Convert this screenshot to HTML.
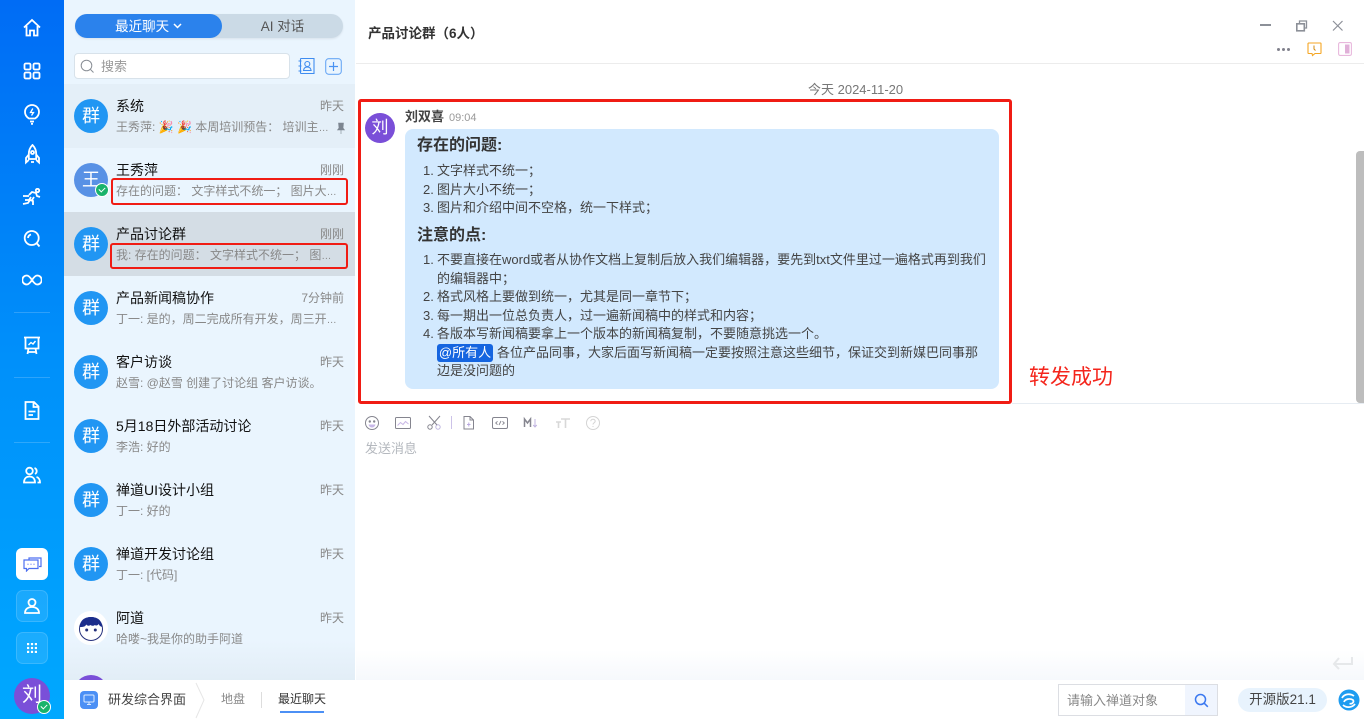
<!DOCTYPE html>
<html><head><meta charset="utf-8">
<style>
*{box-sizing:border-box;margin:0;padding:0}
html,body{width:1364px;height:719px;overflow:hidden;background:#fff;font-family:"Liberation Sans","Noto Sans CJK SC",sans-serif;font-size:13px;color:#333}
.a{position:absolute;white-space:nowrap}
#side{position:absolute;left:0;top:0;width:64px;height:719px;background:linear-gradient(180deg,#006cf5 0%,#0090fa 50%,#00a8ff 100%)}
#side svg{position:absolute;fill:none;stroke:#fff;stroke-width:1.8}
.sep{position:absolute;left:14px;width:36px;height:1px;background:rgba(255,255,255,.18)}
#list{position:absolute;left:64px;top:0;width:291px;height:680px;background:#eaf5fe;overflow:hidden}
.row{position:absolute;left:0;width:291px;height:64px}
.av{position:absolute;left:10px;top:15px;width:34px;height:34px;border-radius:50%;background:#2196f3;color:#fff;font-size:18px;line-height:34px;text-align:center}
.nm{position:absolute;left:52px;top:12px;font-size:14px;line-height:20px;color:#111;white-space:nowrap}
.tm{position:absolute;right:11px;top:12px;font-size:12px;line-height:20px;color:#888;white-space:nowrap}
.ms{position:absolute;left:52px;top:33px;font-size:12px;line-height:20px;color:#888;white-space:nowrap}
.e{font-size:10px}
.redb{position:absolute;border:2px solid #f01c14;border-radius:3px}
.li{position:absolute;left:437px;font-size:13px;line-height:18px;color:#444;white-space:nowrap}
.n{position:absolute;left:423px;font-size:13px;line-height:18px;color:#444}
.h{position:absolute;left:417px;font-size:16px;line-height:22px;font-weight:700;color:#333;white-space:nowrap}
.chk{position:absolute;border-radius:50%;background:#19b36b;border:1.5px solid #fff}
.chk:after{content:"";position:absolute;left:3px;top:2.5px;width:5px;height:3px;border-left:1.2px solid #fff;border-bottom:1.2px solid #fff;transform:rotate(-45deg)}
</style></head><body>

<div id="side">
<svg style="left:22px;top:18px" width="20" height="20" viewBox="0 0 20 20"><path d="M2 9.5 10 2l8 7.5M4.500 8v9.500h3.500v-5h4v5h3.500V8"/></svg>
<svg style="left:23px;top:62px" width="18" height="18" viewBox="0 0 18 18"><rect x="1.500" y="1.500" width="6" height="6" rx="1.300"/><rect x="10.500" y="1.500" width="6" height="6" rx="1.300"/><rect x="1.500" y="10.500" width="6" height="6" rx="1.300"/><rect x="10.500" y="10.500" width="6" height="6" rx="1.300"/></svg>
<svg style="left:23px;top:103px" width="18" height="22" viewBox="0 0 18 22"><path d="M6 15.500C3.500 14 2 12 2 9a7 7 0 0 1 14 0c0 3-1.500 5-4 6.500ZM7 18.500h4M8 20.800h2"/><path d="M9.800 5.500 7.500 9.500h3L8.500 12.500" stroke-width="1.300"/></svg>
<svg style="left:24px;top:144px" width="17" height="21" viewBox="0 0 17 21"><path d="M8.500 1C5.500 4 4.800 7 4.800 10v5h7.400v-5c0-3-.7-6-3.700-9ZM4.800 10.500 2 14v4.500l2.800-2.500M12.200 10.500 15 14v4.500L12.200 16M7 18h3"/><circle cx="8.500" cy="8.500" r="1.500"/></svg>
<svg style="left:22px;top:188px" width="20" height="18" viewBox="0 0 20 18"><path d="M1 8h6M3 12h4l2-3M1 16l5-1 2-3 3 1v4M7 7l3-3 4 1 1 3 3 1M12 9l-2 3"/><circle cx="15.500" cy="2.500" r="1.700"/></svg>
<svg style="left:23px;top:229px" width="18" height="19" viewBox="0 0 18 19"><circle cx="8.700" cy="9" r="7"/><path d="m13.500 14 3 3.500M5 9a4 4 0 0 1 3-3.500"/></svg>
<svg style="left:22px;top:273px" width="20" height="14" viewBox="0 0 20 14"><path d="M10 7C8 4 6.500 2.500 4.800 2.500a4.500 4.500 0 0 0 0 9C6.500 11.500 8 10 10 7c2-3 3.500-4.500 5.200-4.500a4.500 4.500 0 0 1 0 9C13.500 11.500 12 10 10 7Z"/></svg>
<div class="sep" style="top:312px"></div>
<svg style="left:23px;top:336px" width="18" height="19" viewBox="0 0 18 19"><path d="M1 1.500h16M2.500 1.500v11h13v-11M4.500 18l1-5.500M13.500 18l-1-5.500M5 16h8"/><path d="m5.500 9 2.500-2.500 2 1.500 2.500-3" stroke-width="1.400"/></svg>
<div class="sep" style="top:377px"></div>
<svg style="left:24px;top:401px" width="16" height="19" viewBox="0 0 16 19"><path d="M1.500 1h8.500L14.500 5.500V18h-13ZM9.500 1v5h5M4.500 10.500h7M4.500 14h4.500"/></svg>
<div class="sep" style="top:442px"></div>
<svg style="left:23px;top:466px" width="18" height="18" viewBox="0 0 18 18"><circle cx="6.500" cy="5" r="3.300"/><path d="M1 16.500c0-3.500 2-6 5.500-6s5.500 2.500 5.500 6ZM11.500 2a3.300 3.300 0 0 1 .5 6M13.500 11c2 .5 3.500 2.500 3.500 5.500h-2.500"/></svg>

<div class="a" style="left:16px;top:548px;width:32px;height:32px;border-radius:6px;background:#fff"></div>
<svg style="left:23px;top:557px;stroke:#4d6ff0;stroke-width:1.200" width="19" height="15" viewBox="0 0 19 15"><path d="M6 2.500V1h12v8.500h-2M1 3h14v8.500H6l-2.500 2.500v-2.500H1Z"/><path d="M4.500 7.300h1M7.500 7.300h1M10.500 7.300h1" stroke="#7d8cf5" stroke-width="1.400"/></svg>
<div class="a" style="left:16px;top:590px;width:32px;height:32px;border-radius:7px;background:rgba(255,255,255,.1);border:1px solid rgba(255,255,255,.14)"></div>
<svg style="left:24px;top:598px" width="16" height="16" viewBox="0 0 16 16"><circle cx="8" cy="4.500" r="3.500"/><path d="M1 15c0-3.500 2.500-6 7-6s7 2.500 7 6Z"/></svg>
<div class="a" style="left:16px;top:632px;width:32px;height:32px;border-radius:7px;background:rgba(255,255,255,.1);border:1px solid rgba(255,255,255,.14)"></div>
<svg style="left:27px;top:643px;stroke:none;fill:#fff" width="10" height="10" viewBox="0 0 10 10"><rect width="2.200" height="2.200"/><rect x="3.900" width="2.200" height="2.200"/><rect x="7.800" width="2.200" height="2.200"/><rect y="3.900" width="2.200" height="2.200"/><rect x="3.900" y="3.900" width="2.200" height="2.200"/><rect x="7.800" y="3.900" width="2.200" height="2.200"/><rect y="7.800" width="2.200" height="2.200"/><rect x="3.900" y="7.800" width="2.200" height="2.200"/><rect x="7.800" y="7.800" width="2.200" height="2.200"/></svg>
<div class="a" style="left:14px;top:678px;width:36px;height:36px;border-radius:50%;background:#7a4fd8;color:#fff;font-size:20px;line-height:35px;text-align:center">刘</div>
<div class="chk" style="left:37px;top:700px;width:14px;height:14px"></div>
</div>

<div id="list">
<div class="a" style="left:11px;top:14px;width:268px;height:24px;border-radius:12px;background:#cbdae6;box-shadow:0 1px 2px rgba(0,0,0,.08)"></div>
<div class="a" style="left:11px;top:14px;width:147px;height:24px;border-radius:12px;background:#2b82ec;color:#fff;text-align:center;line-height:25px;font-size:13.5px">最近聊天 <svg width="9" height="6" viewBox="0 0 9 6" style="vertical-align:2px"><path d="M1 1l3.500 3.500L8 1" fill="none" stroke="#fff" stroke-width="1.500"/></svg></div>
<div class="a" style="left:158px;top:14px;width:121px;height:24px;color:#555;text-align:center;line-height:25px;font-size:13.5px">AI 对话</div>
<div class="a" style="left:10px;top:53px;width:216px;height:26px;border-radius:4px;background:#fff;border:1px solid #d8e2ea"></div>
<svg class="a" style="left:16px;top:59px" width="15" height="15" viewBox="0 0 15 15"><circle cx="6.500" cy="6.500" r="5.300" fill="none" stroke="#8a8f96" stroke-width="1"/><path d="m10.500 10.500 3 3" stroke="#8a8f96"/></svg>
<div class="a" style="left:37px;top:57px;font-size:13px;line-height:20px;color:#999">搜索</div>
<svg class="a" style="left:234px;top:57px" width="18" height="18" viewBox="0 0 18 18"><path d="M2.500 1.500h13.500v15H2.500M.5 4h3M.5 9h3M.5 14h3" fill="none" stroke="#3f8cf0" stroke-width="1.100"/><path d="M2.500 1.500v15" stroke="#3f8cf0" stroke-width="1.100"/><circle cx="9.300" cy="7" r="2.500" fill="none" stroke="#3f8cf0" stroke-width="1.100"/><path d="M5.500 13.500c.3-2.500 2-3.500 3.800-3.500s3.500 1 3.800 3.500Z" fill="none" stroke="#3f8cf0" stroke-width="1.100"/></svg>
<svg class="a" style="left:261px;top:58px" width="17" height="17" viewBox="0 0 17 17"><rect x=".7" y=".7" width="15.600" height="15.600" rx="3" fill="none" stroke="#6aa8f5" stroke-width="1.100"/><path d="M8.500 4v9M4 8.500h9" stroke="#4a93f2" stroke-width="1.200"/></svg>

<div class="row" style="top:84px;background:#e4eff8"><div class="av">群</div><div class="nm">系统</div><div class="tm">昨天</div><div class="ms">王秀萍: 🎉 🎉 本周培训预告： 培训主<span class="e">…</span></div>
<svg class="a" style="left:272px;top:38px" width="10" height="12" viewBox="0 0 10 12"><path d="M2.500 1h5L7 6l1.500 2h-7L3 6ZM5 8v4" fill="#7c8590" stroke="#7c8590" stroke-width=".6"/></svg></div>
<div class="row" style="top:148px"><div class="av" style="background:#5891e5">王</div>
<div class="chk" style="left:31px;top:35px;width:14px;height:14px"></div>
<div class="nm">王秀萍</div><div class="tm">刚刚</div><div class="ms">存在的问题： 文字样式不统一； 图片大<span class="e">…</span></div></div>
<div class="row" style="top:212px;background:#d4dde5"><div class="av">群</div><div class="nm">产品讨论群</div><div class="tm">刚刚</div><div class="ms">我: 存在的问题： 文字样式不统一； 图<span class="e">…</span></div></div>
<div class="row" style="top:276px"><div class="av">群</div><div class="nm">产品新闻稿协作</div><div class="tm">7分钟前</div><div class="ms">丁一: 是的，周二完成所有开发，周三开<span class="e">…</span></div></div>
<div class="row" style="top:340px"><div class="av">群</div><div class="nm">客户访谈</div><div class="tm">昨天</div><div class="ms">赵雪: @赵雪 创建了讨论组 客户访谈。</div></div>
<div class="row" style="top:404px"><div class="av">群</div><div class="nm">5月18日外部活动讨论</div><div class="tm">昨天</div><div class="ms">李浩: 好的</div></div>
<div class="row" style="top:468px"><div class="av">群</div><div class="nm">禅道UI设计小组</div><div class="tm">昨天</div><div class="ms">丁一: 好的</div></div>
<div class="row" style="top:532px"><div class="av">群</div><div class="nm">禅道开发讨论组</div><div class="tm">昨天</div><div class="ms">丁一: [代码]</div></div>
<div class="row" style="top:596px"><div class="av" style="background:#fff"></div>
<svg class="a" style="left:10px;top:15px" width="34" height="34" viewBox="0 0 34 34"><circle cx="17" cy="18" r="11.500" fill="#fff" stroke="#25307c" stroke-width="1"/><path d="M5.800 16C6 9 11 6 17 6s11 3 11.200 10c-2-.5-3-1.500-3.500-3-1 1.500-2.500 2-4 1-1 1-3 1-4 0-1.500 1-3.500 1-4.500-.5-.7 1.500-1.500 2.500-6.400 2.500Z" fill="#1c2e8c"/><circle cx="12.700" cy="19" r="1.500" fill="#25307c"/><circle cx="21.300" cy="19" r="1.500" fill="#25307c"/></svg>
<div class="nm">阿道</div><div class="tm">昨天</div><div class="ms">哈喽~我是你的助手阿道</div></div>
<div class="a" style="left:0;top:640px;width:291px;height:40px;background:linear-gradient(180deg,rgba(225,236,245,0),rgba(225,236,245,.85))"></div>
<div class="a" style="left:10px;top:675px;width:34px;height:34px;border-radius:50%;background:#7a4fd8"></div>
</div>

<div class="redb" style="left:111px;top:178px;width:237px;height:27px"></div>
<div class="redb" style="left:110px;top:243px;width:238px;height:26px"></div>

<div class="a" style="left:368px;top:24px;font-size:13.5px;line-height:20px;font-weight:700;color:#333">产品讨论群（6人）</div>
<div class="a" style="left:356px;top:63px;width:1008px;height:1px;background:#ececec"></div>
<svg class="a" style="left:1259px;top:20px" width="90" height="12" viewBox="0 0 90 12" fill="none" stroke="#8c9098"><path d="M1 5h11" stroke-width="2"/><rect x="37.800" y="3.800" width="7.500" height="7" stroke-width="1.600"/><path d="M40.500 3V1h7v7h-2" stroke-width="1.300"/><path d="m74 1 9.500 9.500M83.500 1 74 10.500" stroke-width="1.200"/></svg>
<svg class="a" style="left:1276px;top:47px" width="16" height="5"><circle cx="2.500" cy="2.500" r="1.500" fill="#80808c"/><circle cx="7.500" cy="2.500" r="1.500" fill="#80808c"/><circle cx="12.500" cy="2.500" r="1.500" fill="#80808c"/></svg>
<svg class="a" style="left:1307px;top:42px" width="15" height="15" viewBox="0 0 15 15"><path d="M1.500 1h12a.6.6 0 0 1 .5.500V11a.6.6 0 0 1-.5.500H8L5.500 13.500 5 11.500H1.500A.6.600 0 0 1 1 11V1.500Z" fill="none" stroke="#f5a623" stroke-width="1.100"/><path d="M7 3.500V7l1.500 1.500" stroke="#d08a10" fill="none"/></svg>
<svg class="a" style="left:1338px;top:42px" width="14" height="14"><rect x=".6" y=".6" width="12.800" height="12.800" rx="1.500" fill="none" stroke="#e8b8dc" stroke-width="1.100"/><rect x="7" y="2.500" width="4.500" height="9" fill="#e0b0d8"/></svg>

<div class="a" style="left:808px;top:80px;font-size:13px;line-height:20px;color:#777">今天 2024-11-20</div>

<div class="a" style="left:365px;top:113px;width:30px;height:30px;border-radius:50%;background:#7a4fd8;color:#fff;font-size:17px;line-height:29px;text-align:center">刘</div>
<div class="a" style="left:405px;top:107px;font-size:13px;line-height:20px;font-weight:700;color:#444">刘双喜</div>
<div class="a" style="left:449px;top:108px;font-size:11px;line-height:20px;color:#999">09:04</div>
<div class="a" style="left:405px;top:129px;width:594px;height:260px;background:#d2e9fe;border-radius:8px"></div>

<div class="h" style="top:135px">存在的问题:</div>
<div class="n" style="top:162px">1.</div><div class="li" style="top:162px">文字样式不统一；</div>
<div class="n" style="top:181px">2.</div><div class="li" style="top:181px">图片大小不统一；</div>
<div class="n" style="top:199px">3.</div><div class="li" style="top:199px">图片和介绍中间不空格，统一下样式；</div>
<div class="h" style="top:225px">注意的点:</div>
<div class="n" style="top:251px">1.</div><div class="li" style="top:251px">不要直接在word或者从协作文档上复制后放入我们编辑器，要先到txt文件里过一遍格式再到我们</div>
<div class="li" style="top:270px">的编辑器中；</div>
<div class="n" style="top:288px">2.</div><div class="li" style="top:288px">格式风格上要做到统一，尤其是同一章节下；</div>
<div class="n" style="top:307px">3.</div><div class="li" style="top:307px">每一期出一位总负责人，过一遍新闻稿中的样式和内容；</div>
<div class="n" style="top:325px">4.</div><div class="li" style="top:325px">各版本写新闻稿要拿上一个版本的新闻稿复制，不要随意挑选一个。</div>
<div class="a" style="left:437px;top:344px;width:56px;height:18px;border-radius:3px;background:#1565e0;color:#fff;font-size:13px;line-height:17px;text-align:center">@所有人</div>
<div class="li" style="top:344px;left:497px">各位产品同事，大家后面写新闻稿一定要按照注意这些细节，保证交到新媒巴同事那</div>
<div class="li" style="top:362px">边是没问题的</div>

<div class="redb" style="left:358px;top:99px;width:654px;height:305px;border-width:3px;border-color:#f01c14"></div>
<div class="a" style="left:1029px;top:364px;font-size:21px;line-height:28px;color:#f4251c">转发成功</div>
<div class="a" style="left:1012px;top:403px;width:352px;height:1px;background:#e6ecf2"></div>
<div class="a" style="left:1356px;top:151px;width:8px;height:252px;background:#bdbdbd;border-radius:4px 0 0 4px"></div>

<svg class="a" style="left:364px;top:414px" width="240" height="18" viewBox="0 0 240 18" fill="none" stroke="#85858f" stroke-width="1">
<circle cx="8" cy="9" r="6.500"/><circle cx="5.800" cy="7.500" r=".7" fill="#85858f"/><circle cx="10.200" cy="7.500" r=".7" fill="#85858f"/><path d="M4.500 10.500h7c-.5 2-2 3-3.500 3s-3-1-3.500-3Z" fill="#c8b8e8" stroke="none"/>
<rect x="31.500" y="3.500" width="15" height="11" rx="1"/><path d="m33.500 11.500 3-3 2.500 2 2.500-3 3 2.500" stroke="#c9b8e6"/>
<circle cx="66" cy="13" r="2.200"/><circle cx="74" cy="13" r="2.200" stroke="#c0b8e0"/><path d="m65 2 8 9M76 2l-8 9"/>
<path d="M87.500 2v13" stroke="#ccc2e8"/>
<path d="M100 2.500h6l3.500 3.500v9h-9.500ZM106 2.500V6h3.500"/><path d="M104.800 8.500v4M103 10.500h3.500" stroke="#b9a8e0"/>
<rect x="128.500" y="3.500" width="15" height="11" rx="1.500"/><path d="m133.500 7.300-1.800 1.700 1.800 1.700M138.500 7.300l1.800 1.700-1.800 1.700M135 11l2-4" stroke-width=".9"/>
<path d="M160.500 13V5l3 4 3-4v8" stroke-width="1.500"/><path d="M171 5v8m-1.800-2 1.800 2 1.800-2" stroke="#c0b4e0"/>
<path d="M197 5h9M201.500 5v9M192 8h5M194.500 8v6" stroke="#d8d8d8" stroke-width="1.600"/>
<circle cx="229" cy="9" r="6.500" stroke="#d4d4d4"/><path d="M226.800 7.200c0-1.200 1-2 2.200-2s2.200.8 2.200 2c0 1.500-2.200 1.700-2.200 3.300M229 12v1" stroke="#d4d4d4"/>
</svg>
<div class="a" style="left:365px;top:439px;font-size:13px;line-height:20px;color:#b4b8be">发送消息</div>

<div class="a" style="left:356px;top:650px;width:1008px;height:30px;background:linear-gradient(180deg,rgba(240,244,250,0),rgba(240,244,250,.6))"></div>
<svg class="a" style="left:1332px;top:656px" width="22" height="15" viewBox="0 0 22 15" fill="none" stroke="#e6e8ea" stroke-width="2"><path d="M20 1v7H2M7 2 2 8l5 5"/></svg>

<div class="a" style="left:64px;top:680px;width:1300px;height:39px;background:#fff"></div>
<div class="a" style="left:80px;top:691px;width:18px;height:18px;border-radius:4px;background:#4c90f5"></div>
<svg class="a" style="left:83px;top:694px" width="12" height="12" viewBox="0 0 12 12" fill="none" stroke="#dcebff"><rect x="1" y="1" width="10" height="7" rx="1"/><path d="M4 10.500h4M6 8v2.500"/></svg>
<div class="a" style="left:108px;top:690px;font-size:13px;line-height:20px;color:#444">研发综合界面</div>
<svg class="a" style="left:194px;top:682px" width="12" height="37" viewBox="0 0 12 37"><path d="M2 1l8 17L2 36" fill="none" stroke="#e6e6e6"/></svg>
<div class="a" style="left:221px;top:689px;font-size:12px;line-height:20px;color:#888">地盘</div>
<div class="a" style="left:261px;top:692px;width:1px;height:16px;background:#ddd"></div>
<div class="a" style="left:278px;top:689px;font-size:12px;line-height:20px;color:#333">最近聊天</div>
<div class="a" style="left:280px;top:711px;width:44px;height:2px;background:#4c90f5"></div>

<div class="a" style="left:1058px;top:684px;width:160px;height:32px;border:1px solid #dcdee3;background:#fff"></div>
<div class="a" style="left:1185px;top:685px;width:32px;height:30px;background:#f0f5fe"></div>
<div class="a" style="left:1067px;top:691px;font-size:13px;line-height:20px;color:#888">请输入禅道对象</div>
<svg class="a" style="left:1194px;top:693px" width="15" height="15" viewBox="0 0 15 15" fill="none" stroke="#3a78f0" stroke-width="1.500"><circle cx="6.500" cy="6.500" r="5"/><path d="m10.300 10.300 3.500 3.500"/></svg>
<div class="a" style="left:1238px;top:688px;width:89px;height:24px;border-radius:12px;background:#e8f3fd;color:#444;font-size:13.5px;line-height:24px;text-align:center">开源版21.1</div>
<svg class="a" style="left:1338px;top:689px" width="22" height="22" viewBox="0 0 22 22"><circle cx="11" cy="11" r="10.500" fill="#1e9cf0"/><path d="M4 9c2-4 8-5 12-2M6 13c1-3 6-4 9-2 1.500 2-1 4.500-3.500 3.500M5 16c3 3 9 3 12-1" fill="none" stroke="#fff" stroke-width="1.700"/></svg>
</body></html>
